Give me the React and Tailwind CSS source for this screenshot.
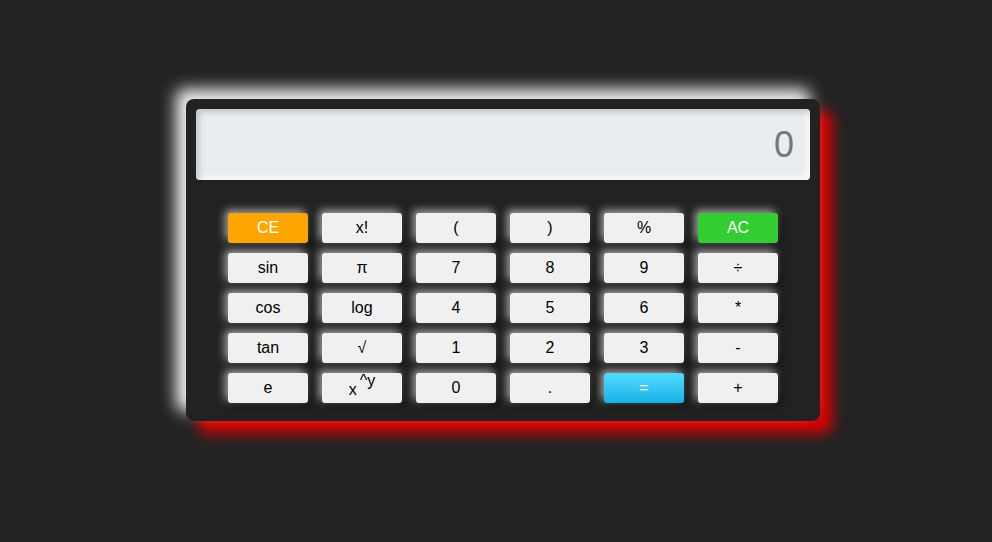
const rows = [
  ["CE", "x!", "(", ")", "%", "AC"],
  ["sin", "π", "7", "8", "9", "÷"],
  ["cos", "log", "4", "5", "6", "*"],
  ["tan", "√", "1", "2", "3", "-"],
  ["e", "xy", "0", ".", "=", "+"],
];

function Key({ label }) {
  let tone = "bg-[#f0f0f0] text-black";
  if (label === "CE") tone = "bg-[#ffa500] text-white";
  if (label === "AC") tone = "bg-[#32cd32] text-white";
  if (label === "=") tone = "bg-gradient-to-b from-[#4fdcff] to-[#12b2e8] text-white";

  return (
    <button
      className={`flex h-[30px] w-[80px] items-center justify-center rounded-[3px] text-base leading-none shadow-[-3px_-3px_9px_rgba(255,255,255,0.6),3px_3px_9px_rgba(0,0,0,0.6)] ${tone}`}
    >
      {label === "xy" ? (
        <span className="relative top-[2px]">
          x<sup className="relative -top-[9px] ml-[3px] text-base">^y</sup>
        </span>
      ) : (
        label
      )}
    </button>
  );
}

export default function App() {
  return (
    <div className="flex h-[542px] w-full items-start justify-center bg-[#232323] pl-[14px] pt-[99px] font-['Liberation_Sans',Arial,sans-serif]">
      <div className="w-[634px] rounded-lg bg-[#222222] px-[10px] pb-[18px] pt-[10px] shadow-[-10px_-10px_16px_rgba(255,255,255,0.95),12px_12px_14px_#e00000]">
        <div className="flex h-[71px] items-center justify-end rounded-[4px] bg-[#e9edf0] px-[16px] shadow-[inset_3px_3px_6px_rgba(0,0,0,0.18),inset_-3px_-3px_6px_rgba(255,255,255,0.9)]">
          <span className="text-[36px] leading-none text-[#777777]">0</span>
        </div>
        <div className="mt-[33px] flex flex-col gap-[10px] px-[32px]">
          {rows.map((row, i) => (
            <div key={i} className="flex gap-[14px]">
              {row.map((label) => (
                <Key key={label} label={label} />
              ))}
            </div>
          ))}
        </div>
      </div>
    </div>
  );
}
